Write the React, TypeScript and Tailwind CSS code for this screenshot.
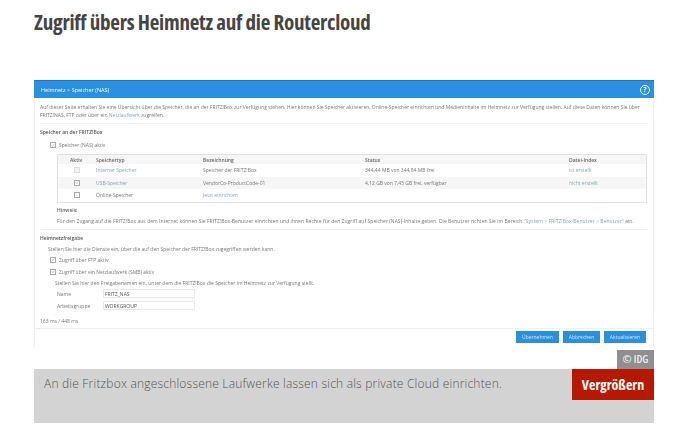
const sans = "font-['Open_Sans','Liberation_Sans',sans-serif]";

const rows = [
  { check: "off", type: "Interner Speicher", name: "Speicher der FRITZ!Box", status: "344,44 MB von 344,84 MB frei", index: "ist erstellt", shade: false },
  { check: "on", type: "USB-Speicher", name: "VendorCo-ProductCode-01", status: "4,12 GB von 7,45 GB frei, verfügbar", index: "nicht erstellt", shade: true },
  { check: "none", type: "Online-Speicher", name: "Jetzt einrichten", status: "", index: "", shade: false },
];

function Check({ on, dim }: { on?: boolean; dim?: boolean }) {
  return (
    <span className={`flex size-[6px] shrink-0 items-center justify-center border-[0.75px] ${dim ? "border-[#ddd] bg-[#f2f2f2]" : "border-[#aaa] bg-white"}`}>
      {on && (
        <svg viewBox="0 0 6 6" className="size-[5px]">
          <path d="M1 3l1.4 1.5L5 1.2" fill="none" stroke="#999" strokeWidth="0.8" />
        </svg>
      )}
    </span>
  );
}

function Option({ label, on }: { label: string; on?: boolean }) {
  return (
    <div className="flex h-[12px] items-center gap-[3px] pl-[15px]">
      <Check on={on} />
      <span>{label}</span>
    </div>
  );
}

function FieldRow({ label, value }: { label: string; value: string }) {
  return (
    <div className="flex h-[12px] items-center pl-[22px]">
      <span className="w-[46px]">{label}</span>
      <span className="flex h-[9px] w-[92px] items-center border border-[#e8e8e8] pl-[1px] text-[#555]">{value}</span>
    </div>
  );
}

function FritzPanel() {
  return (
    <div className="flex h-[267px] w-[620px] flex-col border-x border-[#eee] bg-white text-[5px] leading-[8px] text-[#777]">
      <div className="-mx-px flex h-[18px] items-center justify-between border-t border-[#1a78c0] bg-[#2a90e2] pl-[7px] pr-[4px] text-[5.5px] text-white">
        <span>Heimnetz &gt; Speicher (NAS)</span>
        <span className="flex size-[10px] items-center justify-center rounded-full border border-white text-[7px] font-bold">?</span>
      </div>

      <div className="mx-[5px] mt-[5px] border-b border-[#eee] pb-[4px]">
        <p>
          Auf dieser Seite erhalten Sie eine Übersicht über die Speicher, die an der FRITZ!Box zur Verfügung stehen. Hier können Sie Speicher aktivieren, Online-Speicher einrichten und Medieninhalte im Heimnetz zur Verfügung stellen. Auf diese Daten können Sie über FRITZ!NAS, FTP oder über ein <span className="text-[#7fa6c4]">Netzlaufwerk</span> zugreifen.
        </p>
      </div>

      <div className="mt-[4px] pl-[5px] font-semibold text-[#555]">Speicher an der FRITZ!Box</div>
      <div className="mt-[3px]">
        <Option label="Speicher (NAS) aktiv" on />
      </div>

      <div className="ml-[22px] mr-[6px] mt-[3px] border border-[#e2e2e2]">
        <div className="grid h-[9px] grid-cols-[38px_107px_162px_204px_1fr] items-center bg-[#f6f6f6] font-semibold text-[#666]">
          <span className="pl-[12px]">Aktiv</span>
          <span>Speichertyp</span>
          <span>Bezeichnung</span>
          <span>Status</span>
          <span>Datei-Index</span>
        </div>
        {rows.map((r) => (
          <div key={r.type} className={`grid h-[12.5px] grid-cols-[38px_107px_162px_204px_1fr] items-center ${r.shade ? "bg-[#f6f6f6]" : "bg-white"}`}>
            <span className="pl-[16px]">
              <Check on={r.check === "on"} dim={r.check === "off"} />
            </span>
            <span className={r.check === "none" ? "" : "text-[#7fa6c4]"}>{r.type}</span>
            <span className={r.check === "none" ? "text-[#7fa6c4]" : ""}>{r.name}</span>
            <span>{r.status}</span>
            <span className="text-[#7fa6c4]">{r.index}</span>
          </div>
        ))}
      </div>

      <div className="mx-[6px] mt-[3px] border-b border-[#eee] pb-[4px] pl-[16px]">
        <div className="font-semibold text-[#666]">Hinweis:</div>
        <p className="mt-[3px] whitespace-nowrap tracking-[0.04px]">
          Für den Zugang auf die FRITZ!Box aus dem Internet können Sie FRITZ!Box-Benutzer einrichten und ihnen Rechte für den Zugriff auf Speicher (NAS)-Inhalte geben. Die Benutzer richten Sie im Bereich <span className="text-[#7fa6c4]">"System &gt; FRITZ!Box-Benutzer &gt; Benutzer"</span> ein.
        </p>
      </div>

      <div className="mt-[4px] pl-[5px] font-semibold text-[#555]">Heimnetzfreigabe</div>
      <div className="mt-[3px] pl-[13px]">Stellen Sie hier die Dienste ein, über die auf den Speicher der FRITZ!Box zugegriffen werden kann.</div>
      <div className="mt-[1px]">
        <Option label="Zugriff über FTP aktiv" on />
        <Option label="Zugriff über ein Netzlaufwerk (SMB) aktiv" on />
      </div>
      <div className="mt-[1px] pl-[20px]">Stellen Sie hier den Freigabenamen ein, unter dem die FRITZ!Box die Speicher im Heimnetz zur Verfügung stellt.</div>
      <div className="mt-[1px]">
        <FieldRow label="Name" value="FRITZ_NAS" />
        <FieldRow label="Arbeitsgruppe" value="WORKGROUP" />
      </div>
      <div className="mt-[5px] pl-[5px]">163 ms / 448 ms</div>

      <div className="mt-[3px] flex flex-1 items-start justify-end gap-[4px] border-t border-[#f0f0f0] pr-[7px] pt-[2px]">
        <button className="h-[12px] w-[43px] bg-[#2a8fdc] text-[#d5e9f8]">Übernehmen</button>
        <button className="h-[12px] w-[37px] bg-[#2a8fdc] text-[#d5e9f8]">Abbrechen</button>
        <button className="h-[12px] w-[42px] bg-[#2a8fdc] text-[#d5e9f8]">Aktualisieren</button>
      </div>
    </div>
  );
}

export default function App() {
  return (
    <div className={`h-[437px] w-[674px] overflow-hidden bg-white pl-[34px] ${sans}`}>
      <h1 className="pt-[9px] text-[21px] font-bold leading-[27px] tracking-[-0.25px] text-[#444] [font-stretch:75%]">
        Zugriff übers Heimnetz auf die Routercloud
      </h1>

      <div className="relative mt-[44px] h-[289px] w-[620px]">
        <div className="blur-[0.3px]">
          <FritzPanel />
        </div>
        <span className="absolute bottom-0 right-0 flex h-[19px] w-[37px] items-center justify-center bg-[#8f8f8f] text-[11px] font-semibold text-[#eee] [font-stretch:75%]">
          © IDG
        </span>
      </div>

      <div className="relative h-[54px] w-[620px] bg-[#d3d3d3] pl-[10px] pt-[6px] text-[12px] font-light leading-[18px] tracking-[0.2px] text-[#555]">
        An die Fritzbox angeschlossene Laufwerke lassen sich als private Cloud einrichten.
        <button className="absolute right-0 top-0 h-[31px] w-[82px] bg-[#b71800] text-[14px] font-bold tracking-normal text-white [font-stretch:75%]">
          Vergrößern
        </button>
      </div>
    </div>
  );
}
